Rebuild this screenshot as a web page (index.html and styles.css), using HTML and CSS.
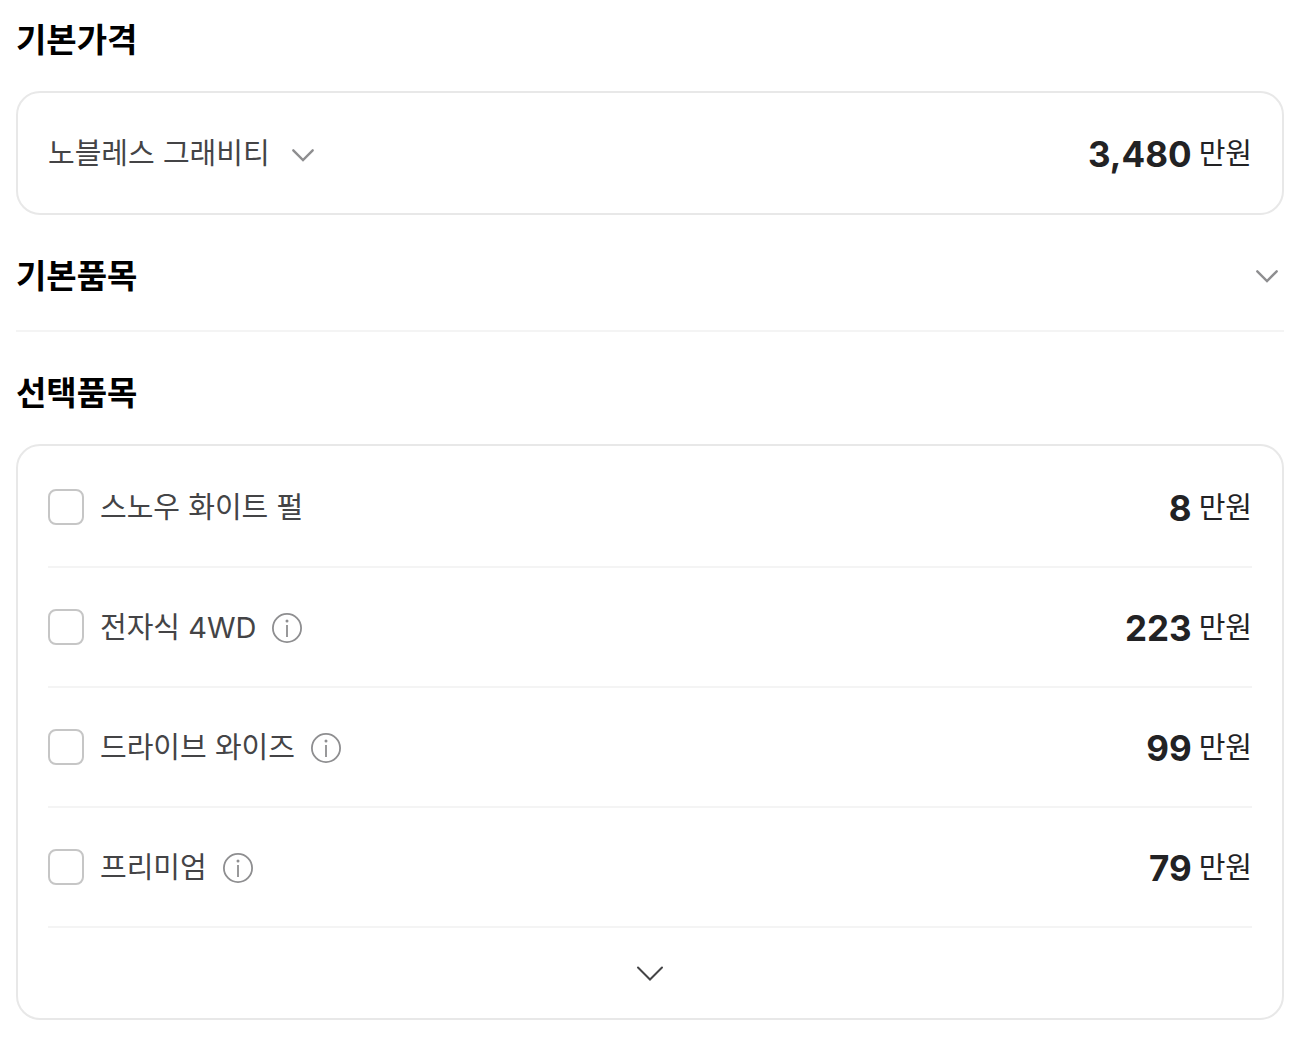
FILE: index.html
```html
<!DOCTYPE html>
<html lang="ko">
<head>
    <meta charset="UTF-8">
    <meta name="viewport" content="width=device-width, initial-scale=1.0">
    <title>가격</title>
    <link rel="stylesheet" href="styles.css">
</head>
<body>
    <main class="container">
        <section>
            <h2 class="title">기본가격</h2>
            <div class="card price-card">
                <div class="trim">
                    <select class="trim-select" aria-label="트림 선택">
                        <option>노블레스 그래비티</option>
                    </select>
                    <svg class="trim-arrow" width="34" height="34" viewBox="0 0 34 34" aria-hidden="true"><path d="M7.3 12.3L17 22L26.7 12.3"/></svg>
                </div>
                <p class="price"><strong>3,480</strong><span>만원</span></p>
            </div>
        </section>

        <section class="basic">
            <h2 class="title">
                <button type="button" class="fold" aria-expanded="false">
                    기본품목
                    <svg class="arrow" width="34" height="34" viewBox="0 0 34 34" aria-hidden="true"><path d="M7.3 12.3L17 22L26.7 12.3"/></svg>
                </button>
            </h2>
        </section>

        <section>
            <h2 class="title">선택품목</h2>
            <div class="card option-card">
                <ul class="options">
                    <li class="option">
                        <input type="checkbox" class="check" id="opt1">
                        <label for="opt1">스노우 화이트 펄</label>
                        <p class="price"><strong>8</strong><span>만원</span></p>
                    </li>
                    <li class="option">
                        <input type="checkbox" class="check" id="opt2">
                        <label for="opt2">전자식 4WD</label>
                        <button type="button" class="info" aria-label="전자식 4WD 설명">
                            <svg width="30" height="30" viewBox="0 0 30 30"><circle class="ring" cx="15" cy="15" r="14.1"/><circle class="dot" cx="15" cy="8" r="1.5"/><path d="M15 12V24"/></svg>
                        </button>
                        <p class="price"><strong>223</strong><span>만원</span></p>
                    </li>
                    <li class="option">
                        <input type="checkbox" class="check" id="opt3">
                        <label for="opt3">드라이브 와이즈</label>
                        <button type="button" class="info" aria-label="드라이브 와이즈 설명">
                            <svg width="30" height="30" viewBox="0 0 30 30"><circle class="ring" cx="15" cy="15" r="14.1"/><circle class="dot" cx="15" cy="8" r="1.5"/><path d="M15 12V24"/></svg>
                        </button>
                        <p class="price"><strong>99</strong><span>만원</span></p>
                    </li>
                    <li class="option">
                        <input type="checkbox" class="check" id="opt4">
                        <label for="opt4">프리미엄</label>
                        <button type="button" class="info" aria-label="프리미엄 설명">
                            <svg width="30" height="30" viewBox="0 0 30 30"><circle class="ring" cx="15" cy="15" r="14.1"/><circle class="dot" cx="15" cy="8" r="1.5"/><path d="M15 12V24"/></svg>
                        </button>
                        <p class="price"><strong>79</strong><span>만원</span></p>
                    </li>
                </ul>
                <button type="button" class="more" aria-label="더보기">
                    <svg width="34" height="34" viewBox="0 0 34 34"><path d="M5 11.5L17 23.5L29 11.5"/></svg>
                </button>
            </div>
        </section>
    </main>
</body>
</html>
```
FILE: styles.css
```css
* {
    box-sizing: border-box;
}

body {
    margin: 0;
    background: #fff;
    color: #444446;
    font-family: Inter, "Noto Sans CJK KR", sans-serif;
    font-size: 29px;
    line-height: 48px;
}

button, select {
    font: inherit;
    color: inherit;
    background: none;
    border: 0;
    padding: 0;
    cursor: pointer;
}

svg {
    display: block;
    fill: none;
}

.container {
    padding: 16px 24px 20px 16px;
}

/* 제목 */
.title {
    margin: 0 0 27px;
    font-size: 33px;
    font-weight: 700;
    line-height: 48px;
    color: #000;
}

.fold {
    display: flex;
    justify-content: space-between;
    align-items: center;
    width: 100%;
}

.arrow, .trim-arrow {
    stroke: #8e8e90;
    stroke-width: 2.4;
    stroke-linecap: round;
}

.basic {
    margin: 37px 0;
    border-bottom: 2px solid #f4f4f4;
}

.basic .title {
    margin-bottom: 30px;
}

/* 카드 */
.card {
    border: 2px solid #e8e8e8;
    border-radius: 24px;
    padding: 0 30px;
}

.price-card {
    display: flex;
    justify-content: space-between;
    align-items: center;
    padding: 37px 30px 35px;
}

.trim {
    position: relative;
}

.trim-select {
    display: block;
    appearance: none;
    height: 48px;
    padding-right: 50px;
}

.trim-arrow {
    position: absolute;
    right: 0;
    top: 8px;
    pointer-events: none;
}

.price {
    display: flex;
    align-items: center;
    gap: 7px;
    margin: 0 0 0 auto;
    color: #222224;
}

.price strong {
    font-size: 35px;
    font-weight: 700;
}

/* 선택 목록 */
.options {
    list-style: none;
    margin: 0;
    padding: 2px 0 0;
}

.option {
    display: flex;
    align-items: center;
    padding: 36px 0 34px;
    border-bottom: 2px solid #f4f4f4;
}

.check {
    appearance: none;
    width: 36px;
    height: 36px;
    margin: 0 16px 2px 0;
    border: 2px solid #c6c6c6;
    border-radius: 8px;
    background: #fff;
}

.check:checked {
    background: #444446;
    border-color: #444446;
}

.info {
    margin-left: 16px;
}

.info svg {
    stroke: #8e8e90;
    stroke-width: 1.8;
}

.info .dot {
    fill: #8e8e90;
    stroke: none;
}

.more {
    display: flex;
    justify-content: center;
    align-items: center;
    width: 100%;
    height: 90px;
}

.more svg {
    stroke: #444446;
    stroke-width: 2;
    stroke-linecap: round;
}
```
